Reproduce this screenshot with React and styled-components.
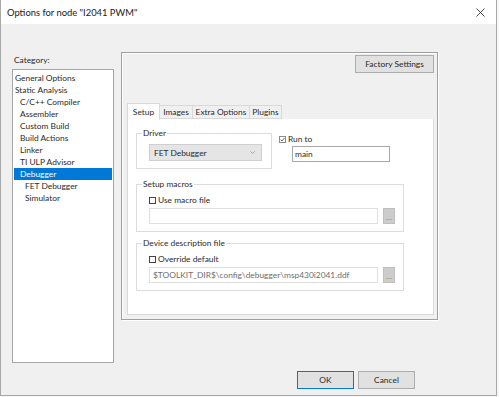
import React from 'react';
import styled, { createGlobalStyle } from 'styled-components';

const GlobalStyle = createGlobalStyle`
  html, body {
    margin: 0;
    padding: 0;
    background: #f7f7f7;
  }
  body {
    font-family: Lato, "Liberation Sans", Arial, sans-serif;
    font-size: 8.4px;
    color: #2a2a2a;
  }
  * {
    box-sizing: border-box;
  }
`;

const categories = [
  { label: 'General Options', level: 0 },
  { label: 'Static Analysis', level: 0 },
  { label: 'C/C++ Compiler', level: 1 },
  { label: 'Assembler', level: 1 },
  { label: 'Custom Build', level: 1 },
  { label: 'Build Actions', level: 1 },
  { label: 'Linker', level: 1 },
  { label: 'TI ULP Advisor', level: 1 },
  { label: 'Debugger', level: 1, selected: true },
  { label: 'FET Debugger', level: 2 },
  { label: 'Simulator', level: 2 },
];

const tabs = [
  { label: 'Setup', width: 33, active: true },
  { label: 'Images', width: 33 },
  { label: 'Extra Options', width: 57 },
  { label: 'Plugins', width: 32 },
];

const CheckMark = () => (
  <svg width="5" height="5" viewBox="0 0 5 5">
    <path d="M0.6 2.6 L2 4 L4.5 0.9" fill="none" stroke="#555" strokeWidth="0.9" />
  </svg>
);

const CloseIcon = () => (
  <svg width="9" height="9" viewBox="0 0 9 9">
    <path d="M0.5 0.5 L8.5 8.5 M8.5 0.5 L0.5 8.5" stroke="#333" strokeWidth="0.9" />
  </svg>
);

const Chevron = () => (
  <svg width="5" height="3" viewBox="0 0 5 3">
    <path d="M0.3 0.3 L2.5 2.5 L4.7 0.3" fill="none" stroke="#9a9a9a" strokeWidth="0.8" />
  </svg>
);

function App() {
  return (
    <>
      <GlobalStyle />
      <Window>
        <TitleBar>
          <Title>Options for node "I2041 PWM"</Title>
          <CloseButton>
            <CloseIcon />
          </CloseButton>
        </TitleBar>
        <Body>
          <MainRow>
            <LeftColumn>
              <CategoryLabel>Category:</CategoryLabel>
              <CategoryList>
                {categories.map((c) => (
                  <CategoryItem key={c.label} level={c.level} selected={c.selected}>
                    {c.label}
                  </CategoryItem>
                ))}
              </CategoryList>
            </LeftColumn>
            <Panel>
              <PanelToolbar>
                <Button width={79}>Factory Settings</Button>
              </PanelToolbar>
              <TabStrip>
                {tabs.map((t) => (
                  <Tab key={t.label} width={t.width} active={t.active}>
                    {t.label}
                  </Tab>
                ))}
              </TabStrip>
              <TabPage>
                <Row>
                  <GroupBox width={136}>
                    <Legend>Driver</Legend>
                    <Combo>
                      <span>FET Debugger</span>
                      <Chevron />
                    </Combo>
                  </GroupBox>
                  <RunToColumn>
                    <CheckRow>
                      <CheckBox checked>
                        <CheckMark />
                      </CheckBox>
                      Run to
                    </CheckRow>
                    <TextInput width={98}>main</TextInput>
                  </RunToColumn>
                </Row>
                <GroupBox width={268} gap={10}>
                  <Legend>Setup macros</Legend>
                  <CheckRow>
                    <CheckBox />
                    Use macro file
                  </CheckRow>
                  <FileRow>
                    <TextInput disabled />
                    <BrowseButton>...</BrowseButton>
                  </FileRow>
                </GroupBox>
                <GroupBox width={268} gap={6}>
                  <Legend>Device description file</Legend>
                  <CheckRow>
                    <CheckBox />
                    Override default
                  </CheckRow>
                  <FileRow>
                    <TextInput disabled>$TOOLKIT_DIR$\config\debugger\msp430i2041.ddf</TextInput>
                    <BrowseButton>...</BrowseButton>
                  </FileRow>
                </GroupBox>
              </TabPage>
            </Panel>
          </MainRow>
          <Footer>
            <Button width={57} primary>OK</Button>
            <Button width={57}>Cancel</Button>
          </Footer>
        </Body>
      </Window>
    </>
  );
}

const Window = styled.div`
  width: 497px;
  height: 396px;
  background: #f0f0f0;
  border: 1px solid #a8a8a8;
  border-top: 0;
  display: flex;
  flex-direction: column;
`;

const TitleBar = styled.div`
  height: 24px;
  background: #fff;
  display: flex;
  align-items: center;
  justify-content: space-between;
  padding: 1px 7px 0 6px;
`;

const Title = styled.span`
  font-size: 9.4px;
  color: #1a1a1a;
`;

const CloseButton = styled.span`
  display: flex;
  align-items: center;
  margin-right: 4px;
`;

const Body = styled.div`
  flex: 1;
  display: flex;
  flex-direction: column;
  padding: 28px 0 0 11px;
`;

const MainRow = styled.div`
  display: flex;
  align-items: flex-start;
  gap: 7px;
`;

const LeftColumn = styled.div`
  width: 102px;
  display: flex;
  flex-direction: column;
`;

const CategoryLabel = styled.div`
  margin-top: 3px;
  padding-left: 2px;
  line-height: 10px;
`;

const CategoryList = styled.div`
  margin-top: 4px;
  height: 294px;
  background: #fff;
  border: 1px solid #a6a6a6;
  padding: 2px 1px;
`;

const CategoryItem = styled.div`
  height: 12px;
  line-height: 12px;
  padding-left: ${(p) => 1 + p.level * 5}px;
  white-space: nowrap;
  background: ${(p) => (p.selected ? '#0078d7' : 'transparent')};
  color: ${(p) => (p.selected ? '#fff' : 'inherit')};
`;

const Panel = styled.div`
  width: 317px;
  height: 268px;
  border: 1px solid #a0a0a0;
  box-shadow: inset 1px 1px 0 #fdfdfd, 1px 1px 0 #fff;
  background: #f0f0f0;
  display: flex;
  flex-direction: column;
  padding: 2px 3px 4px 5px;
`;

const PanelToolbar = styled.div`
  display: flex;
  justify-content: flex-end;
`;

const Button = styled.div`
  width: ${(p) => p.width}px;
  height: 18px;
  display: flex;
  align-items: center;
  justify-content: center;
  background: #e1e1e1;
  border: 1px solid ${(p) => (p.primary ? '#0078d7' : '#adadad')};
  white-space: nowrap;
`;

const TabStrip = styled.div`
  margin-top: 29px;
  height: 17px;
  display: flex;
  align-items: flex-end;
`;

const Tab = styled.div`
  position: relative;
  z-index: ${(p) => (p.active ? 1 : 0)};
  width: ${(p) => p.width}px;
  height: ${(p) => (p.active ? 17 : 14)}px;
  margin-bottom: ${(p) => (p.active ? -1 : 0)}px;
  padding-top: ${(p) => (p.active ? 3 : 1)}px;
  background: ${(p) => (p.active ? '#fff' : '#f0f0f0')};
  border: 1px solid #d9d9d9;
  border-bottom: ${(p) => (p.active ? 0 : 1)}px solid #d9d9d9;
  border-left-width: ${(p) => (p.active ? 1 : 0)}px;
  text-align: center;
  line-height: 10px;
  white-space: nowrap;
`;

const TabPage = styled.div`
  flex: 1;
  background: #fff;
  border: 1px solid #d9d9d9;
  border-top: 0;
  padding: 9px 0 0 8px;
  display: flex;
  flex-direction: column;
  align-items: flex-start;
`;

const Row = styled.div`
  display: flex;
  align-items: flex-start;
`;

const GroupBox = styled.fieldset`
  width: ${(p) => p.width}px;
  margin: ${(p) => p.gap || 0}px 0 0 0;
  min-width: 0;
  padding: 6px 8px 7px 12px;
  border: 1px solid #dcdcdc;
  display: flex;
  flex-direction: column;
  gap: 3px;
`;

const Legend = styled.legend`
  margin-left: -7px;
  padding: 0 1px;
  line-height: 10px;
`;

const Combo = styled.div`
  width: 113px;
  height: 17px;
  background: #e5e5e5;
  border: 1px solid #cfcfcf;
  display: flex;
  align-items: center;
  justify-content: space-between;
  padding: 0 6px 0 4px;
`;

const RunToColumn = styled.div`
  margin: 6px 0 0 7px;
  display: flex;
  flex-direction: column;
  align-items: flex-start;
  gap: 2px;
`;

const CheckRow = styled.div`
  height: 10px;
  display: flex;
  align-items: center;
  gap: 2px;
  white-space: nowrap;
`;

const CheckBox = styled.span`
  width: 7px;
  height: 7px;
  background: #fff;
  border: 1px solid ${(p) => (p.checked ? '#8c8c8c' : '#444')};
  display: flex;
  align-items: center;
  justify-content: center;
`;

const TextInput = styled.div`
  width: ${(p) => (p.width ? `${p.width}px` : 'auto')};
  flex: ${(p) => (p.width ? 'none' : 1)};
  height: 16px;
  display: flex;
  align-items: center;
  padding-left: ${(p) => (p.disabled ? 3 : 2)}px;
  margin-left: ${(p) => (p.width ? 13 : 0)}px;
  background: #fff;
  border: 1px solid ${(p) => (p.disabled ? '#e0e0e0' : '#a8a8a8')};
  color: ${(p) => (p.disabled ? '#6d6d6d' : 'inherit')};
  white-space: nowrap;
  overflow: hidden;
`;

const FileRow = styled.div`
  display: flex;
  gap: 5px;
`;

const BrowseButton = styled.div`
  width: 12px;
  height: 16px;
  background: #cccccc;
  border: 1px solid #bfbfbf;
  color: #8a8a8a;
  display: flex;
  align-items: flex-end;
  justify-content: center;
  padding-bottom: 3px;
  line-height: 6px;
`;

const Footer = styled.div`
  margin-top: 8px;
  display: flex;
  justify-content: flex-end;
  gap: 4px;
  padding-right: 81px;
`;

export default App;
